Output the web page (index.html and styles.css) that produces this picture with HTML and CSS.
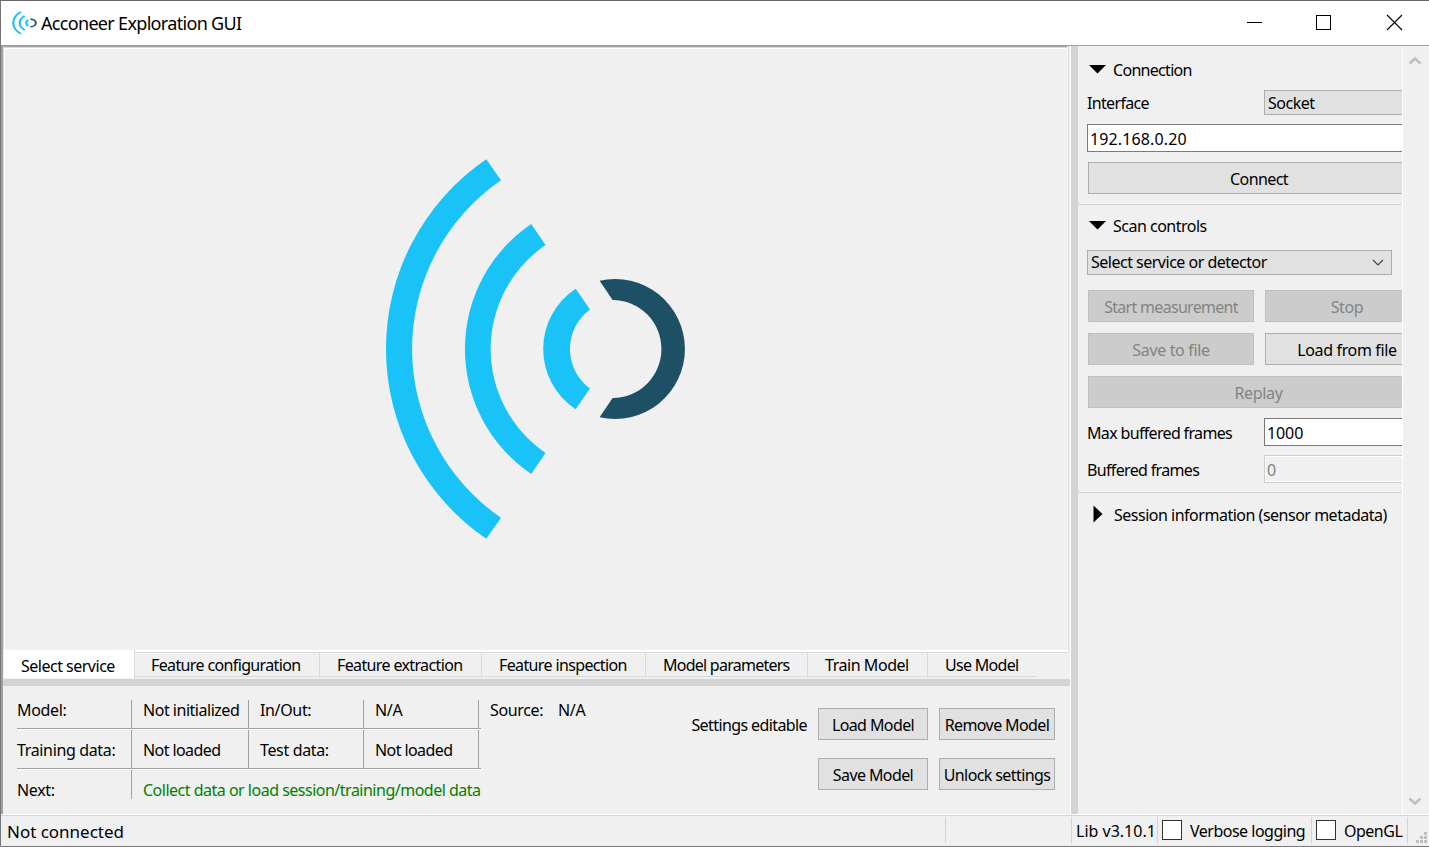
FILE: index.html
```html
<!DOCTYPE html>
<html lang="en">
<head>
<meta charset="utf-8">
<title>Acconeer Exploration GUI</title>
<link rel="stylesheet" href="styles.css">
</head>
<body>
<div class="window">
  <header class="titlebar">
    <svg class="app-icon" viewBox="384 155 304 390" preserveAspectRatio="none">
      <g fill="#19c3f7">
        <path d="M486.3 159.3A229.5 229.5 0 0 0 486.3 538.7L501 517.7A204.5 204.5 0 0 1 501 180.3Z"/>
        <path d="M531.2 224A151 151 0 0 0 531.2 474L545.5 453A126 126 0 0 1 545.5 245Z"/>
        <path d="M575.7 288.8A72 72 0 0 0 575.7 409.2L590 388.5A49 49 0 0 1 590 309.5Z"/>
      </g>
      <path fill="#1d5065" d="M600 280.7A70 70 0 1 1 600 417.3L613 398A48.8 49 0 1 0 613 300Z"/>
    </svg>
    <h1 class="title">Acconeer Exploration GUI</h1>
    <svg class="caption-buttons" width="160" height="20" viewBox="0 0 160 20" fill="none" stroke="#000" shape-rendering="crispEdges">
      <path d="M2 9.5H17"/><path d="M71.500 2.500H85.500V16.500H71.500Z"/>
      <path d="M142 2L157 17M157 2L142 17" shape-rendering="auto" stroke-width="1.1"/>
    </svg>
  </header>

  <main class="body">
    <section class="left">
      <div class="canvas">
        <svg width="304" height="390" viewBox="384 155 304 390">
          <g fill="#19c3f7">
            <path d="M486.3 159.3A229.5 229.5 0 0 0 486.3 538.7L501 517.7A204.5 204.5 0 0 1 501 180.3Z"/>
            <path d="M531.2 224A151 151 0 0 0 531.2 474L545.5 453A126 126 0 0 1 545.5 245Z"/>
            <path d="M575.7 288.8A72 72 0 0 0 575.7 409.2L590 388.5A49 49 0 0 1 590 309.5Z"/>
          </g>
          <path fill="#1d5065" d="M599.600 280.700A70 70 0 1 1 599.600 417.300L612.600 398A48.800 49 0 1 0 612.600 300Z"/>
        </svg>
      </div>
      <nav class="tabs">
        <div class="tab active">Select service</div>
        <div class="tab t2">Feature configuration</div>
        <div class="tab t3">Feature extraction</div>
        <div class="tab t4">Feature inspection</div>
        <div class="tab t5">Model parameters</div>
        <div class="tab t6">Train Model</div>
        <div class="tab t7">Use Model</div>
      </nav>
      <div class="hsplit"></div>
      <div class="ml-panel">
        <div class="info">
          <div class="row">
            <div class="cell first">Model:</div><div class="cell c2">Not initialized</div><div class="cell c3">In/Out:</div><div class="cell c4">N/A</div><div class="cell end"></div>
            <div class="source">Source:</div><div class="source-value">N/A</div>
          </div>
          <div class="row second">
            <div class="cell first">Training data:</div><div class="cell c2 loaded">Not loaded</div><div class="cell c3">Test data:</div><div class="cell c4 loaded">Not loaded</div><div class="cell end"></div>
          </div>
          <div class="row third">
            <div class="cell first">Next:</div><div class="cell c2 next">Collect data or load session/training/model data</div>
          </div>
        </div>
        <div class="model-actions">
          <span class="lock-state">Settings editable</span>
          <div class="btn">Load Model</div><div class="btn">Remove Model</div>
          <span></span>
          <div class="btn">Save Model</div><div class="btn">Unlock settings</div>
        </div>
      </div>
    </section>
    <div class="vsplit"></div>
    <aside class="side">
      <div class="head"><svg width="18" height="10"><path d="M0 1H17L8.500 9.500Z"/></svg><span>Connection</span></div>
      <div class="field interface"><label>Interface</label><div class="combo">Socket</div></div>
      <div class="input address">192.168.0.20</div>
      <div class="btn wide connect">Connect</div>
      <div class="rule"></div>
      <div class="head scan"><svg width="18" height="10"><path d="M0 1H17L8.500 9.500Z"/></svg><span>Scan controls</span></div>
      <div class="combo service"><span>Select service or detector</span><svg width="12" height="8" fill="none" stroke="#444" stroke-width="1.2"><path d="M1 1L6 6L11 1"/></svg></div>
      <div class="pair p1"><div class="btn off start">Start measurement</div><div class="btn off">Stop</div></div>
      <div class="pair"><div class="btn off">Save to file</div><div class="btn load">Load from file</div></div>
      <div class="btn wide off replay">Replay</div>
      <div class="field max"><label>Max buffered frames</label><div class="input">1000</div></div>
      <div class="field buf"><label>Buffered frames</label><div class="input ro">0</div></div>
      <div class="rule r2"></div>
      <div class="head session"><svg width="10" height="18"><path d="M0.500 0.500V17.500L9.500 9Z"/></svg><span>Session information (sensor metadata)</span></div>
    </aside>
    <div class="scroll">
      <svg width="12" height="10" fill="none" stroke="#bfbfbf" stroke-width="2.600"><path d="M0.500 7.500L6 2.500L11.500 7.500"/></svg>
      <svg width="12" height="10" fill="none" stroke="#bfbfbf" stroke-width="2.600"><path d="M0.500 2.500L6 7.500L11.500 2.500"/></svg>
    </div>
  </main>

  <footer class="status">
    <div class="msg">Not connected</div>
    <div class="slot blank"></div>
    <div class="slot lib">Lib v3.10.1</div>
    <div class="slot verbose"><i class="box"></i><span>Verbose logging</span></div>
    <div class="slot opengl"><i class="box"></i><span>OpenGL</span></div>
    <div class="slot grip"><svg width="11" height="11" fill="#bfbfbf"><path d="M8 0h3v3h-3zM4 4h3v3h-3zM8 4h3v3h-3zM0 8h3v3h-3zM4 8h3v3h-3zM8 8h3v3h-3z"/></svg></div>
  </footer>
</div>
</body>
</html>
```
FILE: styles.css
```css
* { box-sizing: border-box; }
body {
  margin: 0;
  overflow: hidden;
  background: #f0f0f0;
  color: #000;
  font-family: "Noto Sans", "Open Sans", sans-serif;
  font-size: 16px;
  line-height: 20px;
  letter-spacing: -0.35px;
  white-space: nowrap;
}
svg { display: block; flex: none; }
.window {
  width: 1429px;
  height: 847px;
  display: flex;
  flex-direction: column;
  border-top: 1px solid #6b696d;
  border-left: 1px solid #77757a;
  border-bottom: 1px solid #d8d8d8;
}
.titlebar {
  height: 45px;
  flex: none;
  display: flex;
  align-items: center;
  background: #fff;
  border-bottom: 1px solid #9f9f9f;
}
.app-icon { width: 25px; height: 24px; margin-left: 11px; margin-bottom: 1px; }
.title {
  margin: 0 0 0 4px;
  font-size: 18px;
  font-weight: 400;
  line-height: 24px;
  letter-spacing: -0.68px;
  flex: 1;
}
.caption-buttons { margin: 0 24px 0 0; }

.body { height: 769px; flex: none; display: flex; border-bottom: 1px solid #fff; }
.left { width: 1070px; flex: none; border-left: 2px solid #a0a0a0; border-right: 1px solid #fff; display: flex; flex-direction: column; }
.canvas {
  height: 606px;
  margin-right: 2px;
  border-top: 1px solid #a0a0a0;
  border-left: 1px solid #d9d9d9;
  border-right: 1px solid #fff;
  border-bottom: 2px solid #fff;
  padding: 108px 0 0 380px;
  box-shadow: inset 0 1px #d9d9d9, inset 1px 2px #fff, 1px 0 #d9d9d9;
}
.tabs { height: 27px; display: flex; align-items: flex-start; margin-right: 2px; border-top: 1px solid #d9d9d9; }
.tab { height: 24px; padding-left: 17px; line-height: 25px; letter-spacing: -0.63px; border-right: 1px solid #d9d9d9; border-bottom: 1px solid #d9d9d9; }
.tab.active { width: 131px; height: 28px; margin: -3px 0 0 1px; padding-left: 17px; line-height: 32px; letter-spacing: -0.5px; background: #fff; border-bottom: 0; }
.tab.t2 { width: 185px; padding-left: 16px; }
.t3 { width: 162px; }
.t4 { width: 164px; }
.tab.t5 { width: 162px; letter-spacing: -0.75px; }
.tab.t6 { width: 120px; letter-spacing: -0.45px; }
.tab.t7 { width: 107px; letter-spacing: -0.7px; border-right: 0; }
.hsplit { height: 7px; background: #d3d3d3; }
.vsplit { width: 7px; flex: none; background: #d3d3d3; }

.ml-panel { flex: 1; display: flex; justify-content: space-between; padding: 14px 15px 0 14px; }
.row { display: flex; height: 29px; width: 464px; border-bottom: 1px solid #a0a0a0; box-shadow: 0 1px #fff; }
.row.second { height: 40px; padding-top: 1px; }
.row.third { height: 30px; padding-top: 1px; border: 0; box-shadow: none; }
.cell { flex: none; border-left: 1px solid #a0a0a0; padding-left: 11px; }
.row.second .cell, .row.third .cell { padding-top: 10px; }
.cell.first { width: 114px; border: 0; padding-left: 0; }
.c2 { width: 117px; letter-spacing: -0.48px; }
.c3 { width: 115px; }
.c4 { width: 115px; }
.loaded { letter-spacing: -0.58px; }
.cell.end { width: 3px; padding-left: 0; }
.cell.next { color: #008000; width: 360px; letter-spacing: -0.5px; }
.source { margin-left: 9px; width: 68px; flex: none; }
.model-actions {
  display: grid;
  grid-template-columns: 116px 110px 116px;
  gap: 18px 11px;
  align-content: start;
  margin-top: 8px;
  letter-spacing: -0.6px;
}
.lock-state { align-self: center; text-align: right; padding-top: 1px; }

.btn { height: 32px; line-height: 32px; text-align: center; background: #e1e1e1; border: 1px solid #adadad; }
.btn.off { background: #ccc; border-color: #bfbfbf; color: #838383; }
.side { width: 324px; flex: none; overflow: hidden; padding-left: 9px; }
.head { display: flex; align-items: center; height: 24px; margin-top: 12px; margin-left: 2px; letter-spacing: -0.7px; }
.head svg { margin-right: 6px; margin-top: -3px; }
.field { display: flex; align-items: center; letter-spacing: -0.66px; }
.field label { width: 177px; flex: none; }
.combo { height: 25px; line-height: 25px; width: 167px; flex: none; padding-left: 3px; background: #e1e1e1; border: 1px solid #adadad; letter-spacing: -0.5px; }
.input { height: 28px; line-height: 28px; width: 167px; flex: none; padding-left: 2px; background: #fff; border: 1px solid #7a7a7a; letter-spacing: -0.1px; }
.input.ro { background: #f0f0f0; border-color: #ccc; color: #838383; box-shadow: inset 0 0 0 1px #fff; }
.interface { margin-top: 8px; }
.input.address { width: 345px; margin-top: 9px; letter-spacing: 0.13px; }
.wide { width: 342px; margin-left: 1px; }
.connect { margin-top: 10px; letter-spacing: -0.6px; }
.rule { height: 1px; background: #d3d3d3; margin: 10px 0 0 -9px; }
.head.scan { margin-top: 9px; letter-spacing: -0.5px; }
.service { width: 305px; margin-top: 12px; display: flex; align-items: center; justify-content: space-between; padding-right: 7px; }
.pair { display: grid; grid-template-columns: 166px 166px; column-gap: 11px; margin: 11px 0 0 1px; }
.pair.p1 { margin-top: 15px; }
.pair .btn:nth-child(2) { padding-right: 2px; }
.start { letter-spacing: -0.7px; }
.replay { margin-top: 11px; padding-right: 1px; }
.max { margin-top: 10px; }
.max label, .buf label { padding-top: 1px; }
.buf { margin-top: 9px; }
.rule.r2 { margin-top: 9px; }
.head.session { margin-top: 10px; margin-left: 6px; letter-spacing: -0.49px; }
.head.session svg { margin-right: 11px; }
.scroll { width: 25px; flex: none; border-left: 1px solid #fff; display: flex; flex-direction: column; justify-content: space-between; align-items: center; padding: 10px 0 8px; }

.status { flex: 1; display: flex; border-top: 1px solid #d3d3d3; border-bottom: 1px solid #777; font-size: 16px; line-height: 29px; padding-top: 1px; }
.msg { padding-left: 6px; width: 944px; font-size: 17px; letter-spacing: -0.02px; }
.slot { height: 26px; line-height: 28px; border-left: 1px solid #d3d3d3; display: flex; align-items: center; }
.slot span { padding-top: 2px; letter-spacing: -0.5px; }
.blank { width: 126px; }
.lib { width: 86px; padding: 2px 0 0 4px; letter-spacing: 0; }
.box { width: 20px; height: 20px; background: #fff; border: 1px solid #333; margin-right: 8px; }
.verbose { width: 154px; padding-left: 4px; }
.opengl { width: 96px; padding-left: 4px; }
.grip { flex: 1; align-items: flex-end; padding-left: 8px; }
```
